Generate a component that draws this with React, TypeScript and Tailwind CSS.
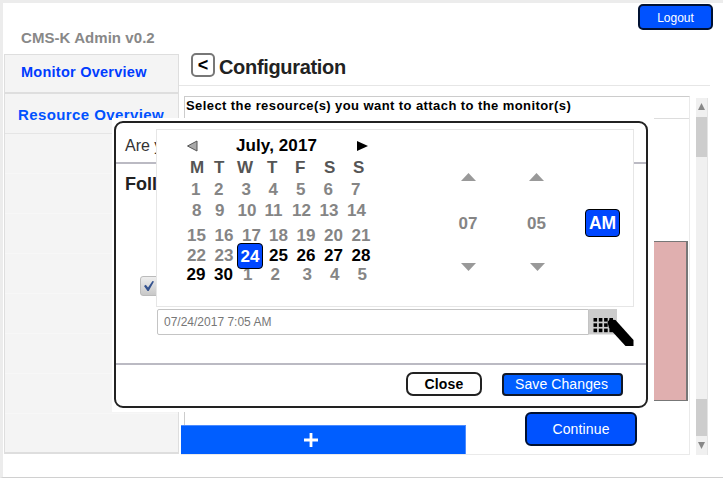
import React from "react";

type Day = { label: string; tone?: "live" | "selected" };

const past = (labels: string[]): Day[] => labels.map((label) => ({ label }));
const live = (labels: string[]): Day[] => labels.map((label) => ({ label, tone: "live" }));

const weeks: { className: string; days: Day[] }[] = [
  { className: "mt-[2px] grid-cols-[23px_27.5px_27px_27.5px_27.5px_27.5px_20px] pl-[33px]", days: past(["1", "2", "3", "4", "5", "6", "7"]) },
  { className: "mt-[1px] grid-cols-[23px_22.5px_27px_27.5px_27.5px_27.5px_20px] pl-[34px]", days: past(["8", "9", "10", "11", "12", "13", "14"]) },
  { className: "mt-[5px] grid-cols-[27.5px_27.5px_27px_27.5px_27.5px_27.5px_20px] pl-[29px]", days: past(["15", "16", "17", "18", "19", "20", "21"]) },
  {
    className: "mt-0 grid-cols-[27.5px_27.5px_27px_27.5px_27.5px_27.5px_20px] pl-[29px]",
    days: [...past(["22", "23"]), { label: "24", tone: "selected" }, ...live(["25", "26", "27", "28"])],
  },
  {
    className: "-mt-[1px] grid-cols-[27.5px_29px_27.5px_32px_27.5px_27.5px_20px] pl-[28.5px]",
    days: [...live(["29", "30"]), ...past(["1", "2", "3", "4", "5"])],
  },
];

function DayCell({ day }: { day: Day }) {
  if (day.tone === "selected") {
    return (
      <span className="relative z-10 -ml-[5px] -mt-[3px] flex h-[26px] w-[26px] items-center justify-center rounded-[4px] border-[1.5px] border-black bg-[#0047ff] pt-[1px] text-white">
        {day.label}
      </span>
    );
  }
  return <span className={day.tone === "live" ? "text-black" : "text-[#858585]"}>{day.label}</span>;
}

function Calendar() {
  return (
    <div className="w-[250px] text-[17px] font-bold leading-[20px]">
      <div className="mb-[1px] flex h-[27px] items-center pl-[29px] pt-[5px]">
        <svg width="11" height="12" viewBox="0 0 11 12"><path d="M.5 6 10 1v10Z" fill="#aaa" stroke="#555" /></svg>
        <span className="ml-[38px] w-[82px] whitespace-nowrap tracking-[0.1px] text-black">July, 2017</span>
        <svg className="ml-[39px]" width="11" height="12" viewBox="0 0 11 12"><path d="M0 1 11 6 0 11Z" fill="#000" /></svg>
      </div>
      <div className="grid grid-cols-[24px_23px_30px_28px_29px_29px_20px] pl-[32px] text-[#555]">
        {["M", "T", "W", "T", "F", "S", "S"].map((name, i) => <span key={i}>{name}</span>)}
      </div>
      {weeks.map((week, i) => (
        <div key={i} className={"grid h-[20px] " + week.className}>
          {week.days.map((day, j) => <DayCell key={j} day={day} />)}
        </div>
      ))}
    </div>
  );
}

function Spinner({ value }: { value: string }) {
  return (
    <div className="flex w-[20px] flex-col items-center text-[17px] font-bold leading-[20px] text-[#858585]">
      <svg width="15" height="8" viewBox="0 0 15 8"><path d="M0 8 7.5 0 15 8Z" fill="#999" /></svg>
      <span className="mt-[33px]">{value}</span>
      <svg className="ml-[1px] mt-[29px]" width="15" height="8" viewBox="0 0 15 8"><path d="M0 0 7.5 8 15 0Z" fill="#999" /></svg>
    </div>
  );
}

function DatePicker() {
  return (
    <div className="absolute left-[40px] top-[6px] flex h-[178px] w-[478px] border border-[#e6e6e6] bg-white pl-[1px]">
      <Calendar />
      <div className="ml-[50px] flex pt-[43px]">
        <Spinner value="07" />
        <div className="w-[48.5px]" />
        <Spinner value="05" />
        <div className="ml-[38.5px] mt-[36px] flex h-[28px] w-[35px] items-center justify-center rounded-[4px] border-[1.5px] border-black bg-[#0047ff] text-[17.5px] font-bold text-white">
          AM
        </div>
      </div>
    </div>
  );
}

function GridIcon() {
  const dots = [0, 1, 2].flatMap((r) => [0, 1, 2, 3].map((c) => [c, r]));
  return (
    <svg className="shrink-0 overflow-visible" width="28" height="26" viewBox="0 0 28 26">
      <rect width="28" height="25.5" fill="#ccc" />
      {dots.map(([c, r]) => <rect key={c + "-" + r} x={4.5 + c * 5.3} y={9 + r * 5.3} width="3.6" height="3.6" />)}
      <path d="M18.5 13 20.5 10.5 26.5 11 44.5 31V37H36.5L20 19Z" />
    </svg>
  );
}

function Modal() {
  return (
    <div className="absolute left-[112px] top-[118px] h-[294px] w-[542px] bg-white p-[2px] pt-[3px]">
      <div className="relative flex h-[287px] w-[534px] flex-col rounded-[9px] border-2 border-[#222] bg-white">
        <div className="h-[41px] border-b-2 border-[#bbbac3] pl-[9px] pt-[13px] text-[16px] leading-[20px] text-[#333]">Are y</div>
        <div className="flex h-[201px] flex-col border-b-2 border-[#bbbac3]">
          <h2 className="pl-[9px] pt-[9px] text-[18px] font-bold leading-[22px] text-[#222]">Foll</h2>
          <div className="ml-[24px] mt-[81px] h-[20px] w-[22px] rounded-[3px] border border-[#bbb] bg-linear-to-b from-[#eee] to-[#c8c8c8]">
            <svg width="16" height="18" viewBox="0 0 16 18"><path d="m3 9 1.8-1.2L7 10.5 11.5 4l1.5.5L7.7 14H6.5Z" fill="#35538f" /></svg>
          </div>
          <div className="ml-[41px] mt-[13px] flex h-[26px]">
            <div className="h-[26px] w-[432px] rounded-l-[2px] border border-[#c4c4c4] pl-[6px] text-[12px] leading-[24px] text-[#777]">07/24/2017 7:05 AM</div>
            <GridIcon />
          </div>
        </div>
        <div className="flex pl-[290px] pt-[7px]">
          <button className="h-[24px] w-[76px] rounded-[7px] border-2 border-[#222] pb-[1px] text-[14px] font-bold leading-[18px] tracking-[0.2px] text-black">Close</button>
          <button className="ml-[20px] mt-[1px] h-[23px] w-[121px] rounded-[4px] border-2 border-[#111827] bg-[#005eff] pr-[2px] text-[14px] leading-[17px] tracking-[0.1px] text-white">Save Changes</button>
        </div>
        <DatePicker />
      </div>
    </div>
  );
}

function Sidebar() {
  return (
    <aside className="mt-[51px] flex h-[400px] w-[175px] flex-col border border-b-2 border-[#dedede] bg-[#f4f4f4] font-bold text-[#003cff]">
      <div className="h-[39px] border-b-2 border-[#dedede] pl-[16px] pt-[7px] text-[14.5px] leading-[20px] tracking-[0.25px]">Monitor Overview</div>
      <div className="h-[40px] border-b border-[#e5e5e5] pl-[13px] pt-[11px] text-[15px] leading-[20px] tracking-[0.4px] text-[#0052ff]">Resource Overview</div>
      {[0, 1, 2, 3, 4, 5, 6].map((n) => <div key={n} className="h-[40px] border-b border-[#f7f7f7]" />)}
    </aside>
  );
}

function Scrollbar() {
  return (
    <div className="ml-[6px] mt-[2px] flex h-[357px] w-[12px] flex-col items-center border-r border-[#e4e4e4] bg-[#f0f0f0]">
      <svg className="mt-[5px] shrink-0" width="7" height="7" viewBox="0 0 7 7"><path d="M0 7 3.5 0 7 7Z" fill="#888" /></svg>
      <div className="mt-[7px] h-[40px] w-full shrink-0 bg-[#cdcdcd]" />
      <div className="h-[242px] shrink-0" />
      <div className="h-[37px] w-full shrink-0 bg-[#cdcdcd]" />
      <svg className="mt-[6px] shrink-0" width="7" height="7" viewBox="0 0 7 7"><path d="M0 0 3.5 7 7 0Z" fill="#888" /></svg>
    </div>
  );
}

export default function App() {
  return (
    <div className="relative h-[479px] w-[723px] overflow-hidden bg-white font-['Liberation_Sans',Arial,sans-serif]">
      <div className="flex h-[478px] border-b border-l-[3px] border-t-[3px] border-b-[#d0d0d0] border-l-[#ececec] border-t-[#ececec]">
        <div className="relative ml-[1px] w-[175px] shrink-0">
          <h1 className="absolute left-[17px] top-[25px] whitespace-nowrap text-[15px] font-bold leading-[20px] tracking-[0.06px] text-[#888]">CMS-K Admin v0.2</h1>
          <Sidebar />
        </div>
        <main className="flex min-w-0 flex-1 flex-col">
          <div className="flex h-[50px] justify-end pr-[10px] pt-[1px]">
            <button className="h-[26px] w-[75px] rounded-[5px] border-2 border-[#001133] bg-[#0052ff] pt-[2px] text-[12px] leading-[20px] text-white">Logout</button>
          </div>
          <header className="mr-[13px] flex h-[33px] border-b border-[#e6e6e6] pl-[12px]">
            <button className="h-[24px] w-[24px] rounded-[5px] border-2 border-[#777] text-[18px] font-bold leading-[19px] text-black">&lt;</button>
            <h2 className="ml-[4px] mt-[1px] text-[20px] font-bold leading-[26px] tracking-[-0.33px] text-[#222]">Configuration</h2>
          </header>
          <div className="flex pl-[2px] pt-[10px]">
            <section className="flex h-[359px] w-[509px] flex-col">
              <div className="ml-[3px] flex h-[329px] flex-col border-l border-r border-t border-[#ccc] border-r-[#eaeaea]">
                <div className="h-[22px] border-b border-[#ddd] pl-[1px] text-[13px] font-bold leading-[18px] tracking-[0.42px] text-black">Select the resource(s) you want to attach to the monitor(s)</div>
                <div className="ml-[430px] mr-[1px] mt-[122px] h-[160px] border border-r-2 border-[#777] bg-[#e0afaf]" />
              </div>
              <div className="flex h-[30px] border-b border-r border-[#eaeaea]">
                <div className="flex h-[29px] w-[285px] items-center justify-center border-r border-t border-[#4b8bff] bg-[#005eff] pr-[26px] text-white">
                  <svg className="ml-[2px]" width="16" height="16" viewBox="0 0 16 16"><path d="M8 1v14M1 8h14" stroke="#fff" strokeWidth="2.8" /></svg>
                </div>
                <button className="-mt-[13px] ml-[59px] h-[34px] w-[112px] rounded-[6px] border-2 border-[#001133] bg-[#0052ff] text-[14px] leading-[27px] tracking-[0.15px] text-white">Continue</button>
              </div>
            </section>
            <Scrollbar />
          </div>
        </main>
      </div>
      <Modal />
    </div>
  );
}
